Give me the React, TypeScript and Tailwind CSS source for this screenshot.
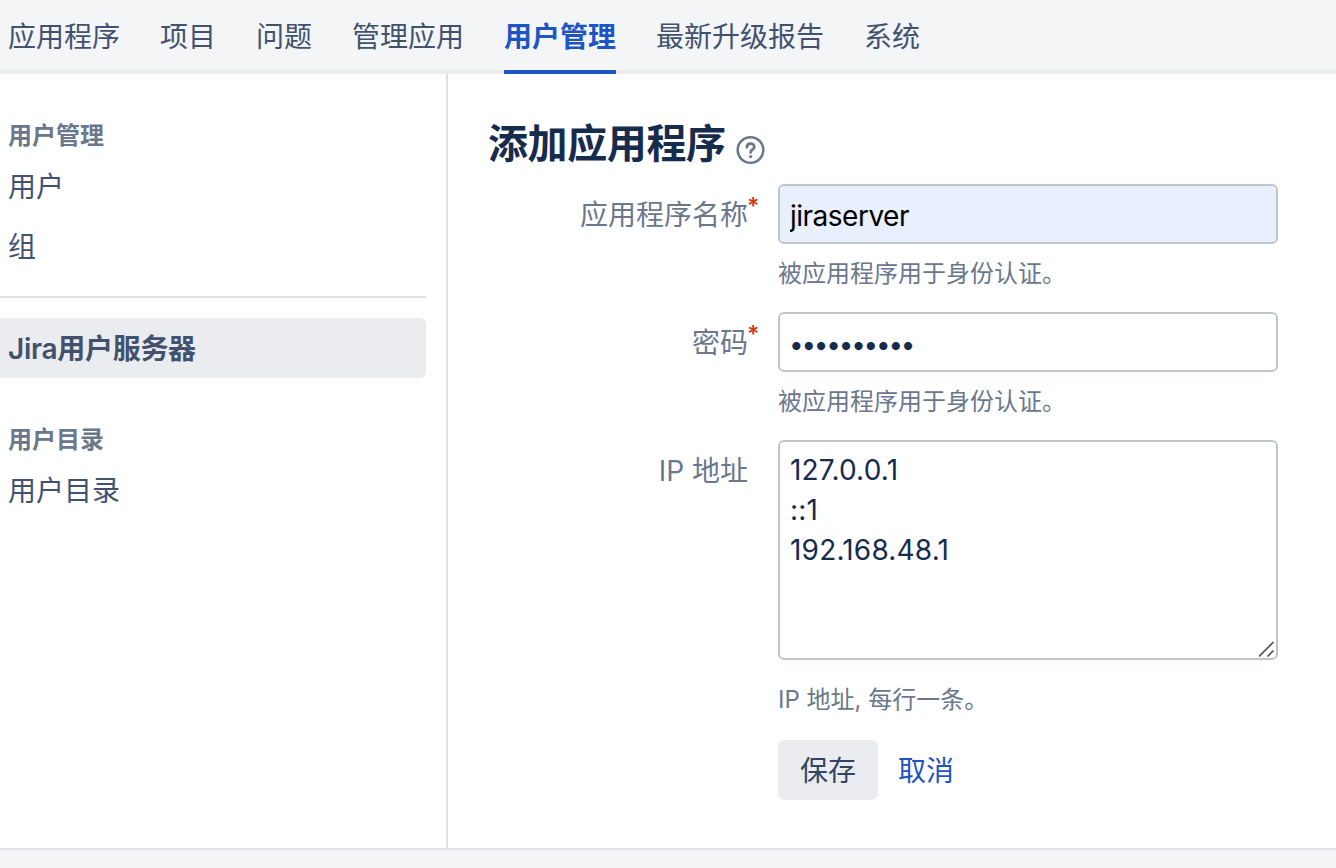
import type { ReactNode } from "react";

const tabs = ["应用程序", "项目", "问题", "管理应用", "用户管理", "最新升级报告", "系统"];
const activeTab = "用户管理";

function TopNav() {
  return (
    <nav className="flex h-[74px] shrink-0 gap-10 border-b-4 border-[#ebecf0] bg-[#f4f5f7] pl-2 text-[28px] leading-[40px]">
      {tabs.map((tab) => (
        <a
          key={tab}
          className={
            tab === activeTab
              ? "h-[74px] whitespace-nowrap border-b-4 border-[#1d55c4] pt-[17px] font-semibold text-[#1d55c4]"
              : "h-[70px] whitespace-nowrap pt-[17px] text-[#42526e]"
          }
        >
          {tab}
        </a>
      ))}
    </nav>
  );
}

function SideHeading({ children }: { children: ReactNode }) {
  return <h2 className="h-10 pl-2 text-[24px] font-semibold leading-[40px] text-[#6b778c]">{children}</h2>;
}

function SideItem({ children, active }: { children: ReactNode; active?: boolean }) {
  return (
    <a
      className={
        active
          ? "block h-[60px] rounded-r-[6px] bg-[#ebecf0] pl-2 font-semibold leading-[62px] tracking-[-0.3px]"
          : "block h-[60px] pl-2 leading-[62px]"
      }
    >
      {children}
    </a>
  );
}

function Sidebar() {
  return (
    <aside className="w-[448px] shrink-0 border-r-2 border-[#dfe1e6] pr-5 pt-[42px] text-[28px] text-[#42526e]">
      <SideHeading>用户管理</SideHeading>
      <SideItem>用户</SideItem>
      <SideItem>组</SideItem>
      <hr className="mb-5 mt-5 border-t-2 border-[#dfe1e6]" />
      <SideItem active>Jira用户服务器</SideItem>
      <div className="mt-[42px]">
        <SideHeading>用户目录</SideHeading>
        <SideItem>用户目录</SideItem>
      </div>
    </aside>
  );
}

function HelpIcon() {
  return (
    <svg className="ml-[10px] mt-[15px] h-[30px] w-[30px]" viewBox="0 0 30 30" fill="none">
      <circle cx="14.5" cy="15" r="12.8" stroke="#6b778c" strokeWidth="2.6" />
      <path
        d="M10.9 12.3c0-2.3 1.6-3.7 3.7-3.7s3.7 1.4 3.7 3.3c0 2.8-3.7 2.8-3.7 5.6"
        stroke="#6b778c"
        strokeWidth="2.7"
        strokeLinecap="round"
      />
      <circle cx="14.6" cy="21.6" r="1.6" fill="#6b778c" />
    </svg>
  );
}

function Field({ label, required, hint, hintClass, children }: {
  label: string;
  required?: boolean;
  hint: string;
  hintClass: string;
  children: ReactNode;
}) {
  return (
    <div className="flex">
      <label className="relative mr-[30px] w-[260px] shrink-0 pt-[11px] text-right text-[28px] leading-[40px] text-[#6b778c]">
        {label}
        {required && (
          <span className="absolute left-full top-[2px] -ml-px text-[23px] font-semibold leading-[40px] text-[#cc3a1b]">*</span>
        )}
      </label>
      <div className="w-[500px]">
        {children}
        <p className={`text-[24px] leading-[40px] text-[#6b778c] ${hintClass}`}>{hint}</p>
      </div>
    </div>
  );
}

const control = "block w-full rounded-[6px] border-2 border-[#c1c4cd] outline-none ";

function AddApplication() {
  return (
    <main className="flex-1 pl-10 pt-[46px]">
      <div className="flex h-16">
        <h1 className="text-[40px] font-semibold leading-[48px] tracking-[-0.4px] text-[#172b4d]">添加应用程序</h1>
        <HelpIcon />
      </div>
      <form className="flex flex-col">
        <Field label="应用程序名称" required hint="被应用程序用于身份认证。" hintClass="mt-[10px] mb-[18px]">
          <input
            className={control + "h-[60px] bg-[#e8effd] px-[10px] pt-1 text-[28px] tracking-[-0.5px] text-black"}
            defaultValue="jiraserver"
          />
        </Field>
        <Field label="密码" required hint="被应用程序用于身份认证。" hintClass="mt-[10px] mb-[18px]">
          <input
            type="password"
            className={control + "h-[60px] bg-white px-[9px] pt-[5px] text-[26px] tracking-[-2.2px] text-[#172b4d]"}
            defaultValue="0123456789"
          />
        </Field>
        <Field label="IP 地址" hint="IP 地址, 每行一条。" hintClass="mt-5 mb-5">
          <div className="relative">
            <textarea
              className={control + "h-[220px] resize-none bg-white px-[10px] pt-2 text-[28px] leading-[40px] tracking-[0.2px] text-[#172b4d]"}
              defaultValue={"127.0.0.1\n::1\n192.168.48.1"}
            />
            <svg className="absolute bottom-[3px] right-[3px] h-4 w-4" viewBox="0 0 16 16" stroke="#555" strokeWidth="1.7">
              <path d="M0 15.5 14.5 1M8.5 15.5 14.5 9.5" />
            </svg>
          </div>
        </Field>
        <div className="ml-[290px] flex text-[28px] leading-[62px]">
          <button type="button" className="h-[60px] w-[100px] rounded-[6px] bg-[#ebecf0] text-[#344563]">
            保存
          </button>
          <a className="ml-5 text-[#1d55c4]">取消</a>
        </div>
      </form>
    </main>
  );
}

export default function App() {
  return (
    <div className="flex h-[868px] w-[1336px] flex-col overflow-hidden bg-white font-['Inter','Noto_Sans_CJK_SC',sans-serif]">
      <TopNav />
      <div className="flex h-[774px] shrink-0">
        <Sidebar />
        <AddApplication />
      </div>
      <footer className="flex-1 border-t-2 border-[#dfe1e6] bg-[#f4f5f7]" />
    </div>
  );
}
